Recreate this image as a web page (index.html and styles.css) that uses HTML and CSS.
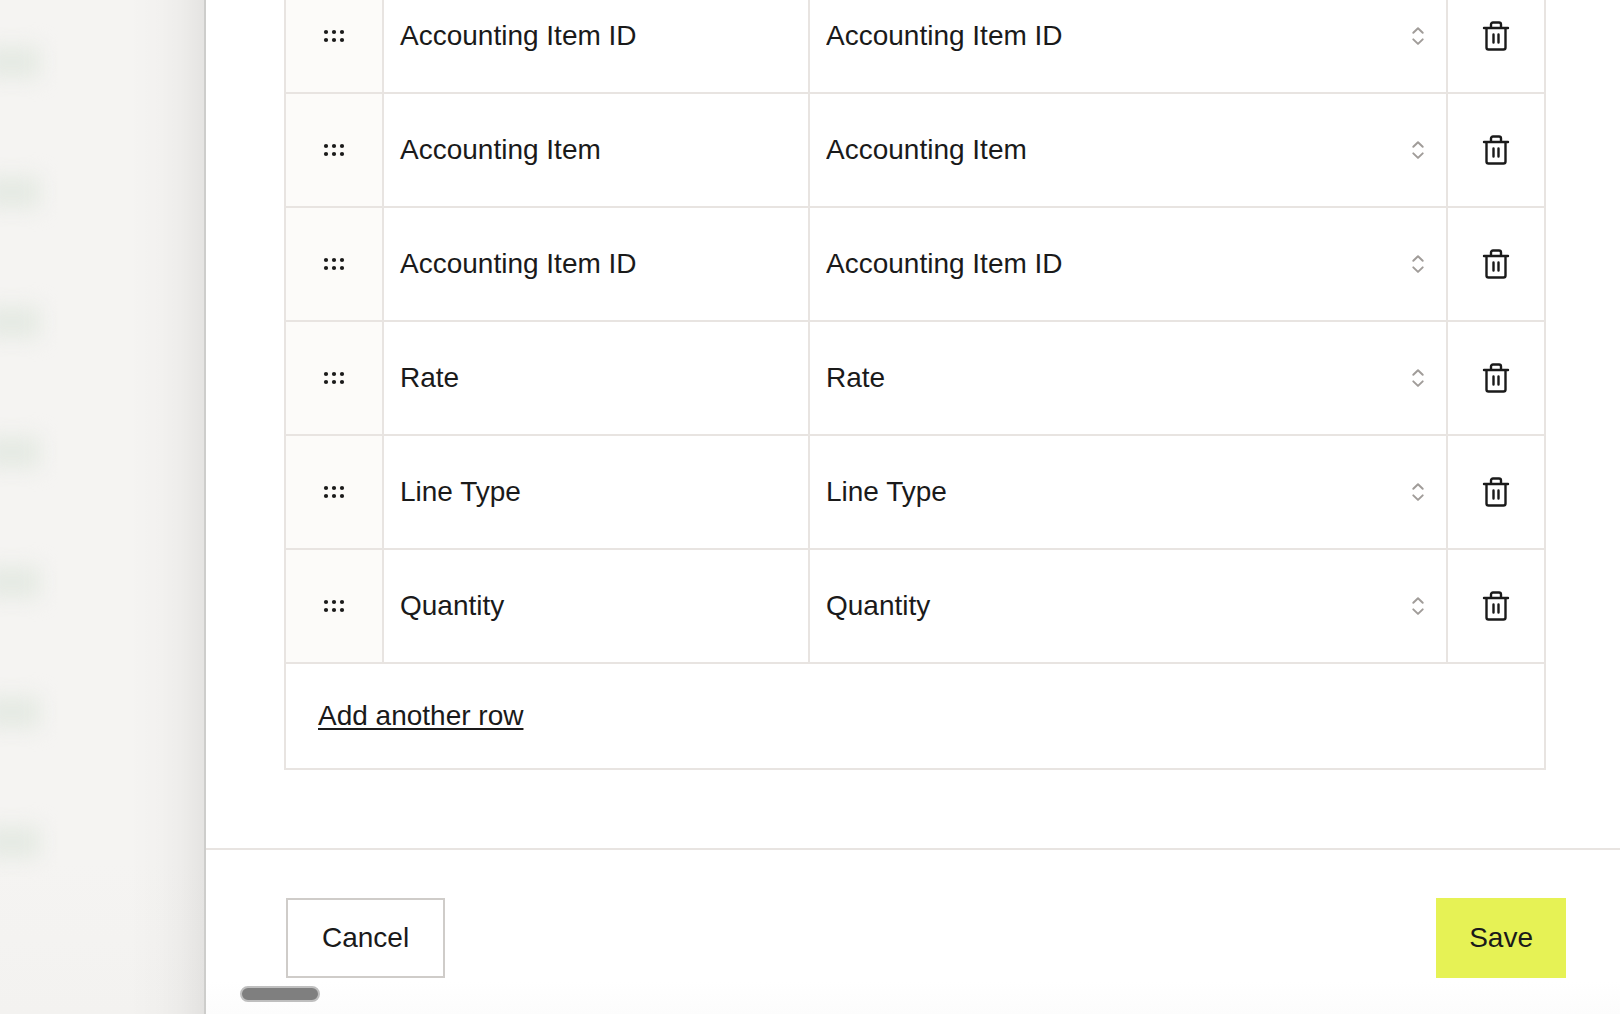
FILE: index.html
```html
<!DOCTYPE html>
<html lang="en">
<head>
<meta charset="utf-8">
<meta name="viewport" content="width=device-width, initial-scale=1">
<title>Edit columns</title>
<link rel="stylesheet" href="styles.css">
</head>
<body>
<svg class="sprite" aria-hidden="true">
  <symbol id="grip" viewBox="0 0 24 16">
    <g fill="currentColor"><circle cx="4" cy="4" r="2.1"/><circle cx="12" cy="4" r="2.1"/><circle cx="20" cy="4" r="2.1"/><circle cx="4" cy="12" r="2.1"/><circle cx="12" cy="12" r="2.1"/><circle cx="20" cy="12" r="2.1"/></g>
  </symbol>
  <symbol id="sort" viewBox="0 0 16 24">
    <path d="M3.3 8.8 8 4.3l4.7 4.5M3.3 15.4 8 19.9l4.7-4.5" fill="none" stroke="currentColor" stroke-width="2" stroke-linecap="round" stroke-linejoin="round"/>
  </symbol>
  <symbol id="trash" viewBox="0 0 32 32">
    <path d="M4 8h24M6.5 8v19.5a2 2 0 0 0 2 2h15a2 2 0 0 0 2-2V8M11 8V4.5a2 2 0 0 1 2-2h6a2 2 0 0 1 2 2V8M13.5 14.5v8M18.5 14.5v8" fill="none" stroke="currentColor" stroke-width="2.4" stroke-linecap="round" stroke-linejoin="round"/>
  </symbol>
</svg>
<div class="app">
  <div class="backdrop" aria-hidden="true">
    <span class="pill"></span><span class="pill"></span><span class="pill"></span><span class="pill"></span><span class="pill"></span><span class="pill"></span><span class="pill"></span>
  </div>
  <main class="drawer">
    <div class="drawer-body">
      <table class="fields">
        <colgroup><col class="col-grip"><col class="col-name"><col><col class="col-delete"></colgroup>
        <tbody>
          <tr>
            <td class="grip-cell"><button class="icon-button" aria-label="Move row"><svg class="grip"><use href="#grip"/></svg></button></td>
            <td class="name-cell">Accounting Item ID</td>
            <td><div class="picker"><select aria-label="Source for Accounting Item ID"><option>Accounting Item ID</option></select><svg class="sort"><use href="#sort"/></svg></div></td>
            <td><button class="icon-button" aria-label="Delete row"><svg class="trash"><use href="#trash"/></svg></button></td>
          </tr>
          <tr>
            <td class="grip-cell"><button class="icon-button" aria-label="Move row"><svg class="grip"><use href="#grip"/></svg></button></td>
            <td class="name-cell">Accounting Item</td>
            <td><div class="picker"><select aria-label="Source for Accounting Item"><option>Accounting Item</option></select><svg class="sort"><use href="#sort"/></svg></div></td>
            <td><button class="icon-button" aria-label="Delete row"><svg class="trash"><use href="#trash"/></svg></button></td>
          </tr>
          <tr>
            <td class="grip-cell"><button class="icon-button" aria-label="Move row"><svg class="grip"><use href="#grip"/></svg></button></td>
            <td class="name-cell">Accounting Item ID</td>
            <td><div class="picker"><select aria-label="Source for Accounting Item ID"><option>Accounting Item ID</option></select><svg class="sort"><use href="#sort"/></svg></div></td>
            <td><button class="icon-button" aria-label="Delete row"><svg class="trash"><use href="#trash"/></svg></button></td>
          </tr>
          <tr>
            <td class="grip-cell"><button class="icon-button" aria-label="Move row"><svg class="grip"><use href="#grip"/></svg></button></td>
            <td class="name-cell">Rate</td>
            <td><div class="picker"><select aria-label="Source for Rate"><option>Rate</option></select><svg class="sort"><use href="#sort"/></svg></div></td>
            <td><button class="icon-button" aria-label="Delete row"><svg class="trash"><use href="#trash"/></svg></button></td>
          </tr>
          <tr>
            <td class="grip-cell"><button class="icon-button" aria-label="Move row"><svg class="grip"><use href="#grip"/></svg></button></td>
            <td class="name-cell">Line Type</td>
            <td><div class="picker"><select aria-label="Source for Line Type"><option>Line Type</option></select><svg class="sort"><use href="#sort"/></svg></div></td>
            <td><button class="icon-button" aria-label="Delete row"><svg class="trash"><use href="#trash"/></svg></button></td>
          </tr>
          <tr>
            <td class="grip-cell"><button class="icon-button" aria-label="Move row"><svg class="grip"><use href="#grip"/></svg></button></td>
            <td class="name-cell">Quantity</td>
            <td><div class="picker"><select aria-label="Source for Quantity"><option>Quantity</option></select><svg class="sort"><use href="#sort"/></svg></div></td>
            <td><button class="icon-button" aria-label="Delete row"><svg class="trash"><use href="#trash"/></svg></button></td>
          </tr>
        </tbody>
        <tfoot>
          <tr><td class="add-cell" colspan="4"><button class="add-row">Add another row</button></td></tr>
        </tfoot>
      </table>
    </div>
    <footer class="drawer-footer">
      <button class="button">Cancel</button>
      <button class="button button-primary">Save</button>
    </footer>
    <div class="scroll-thumb"></div>
  </main>
</div>
</body>
</html>
```
FILE: styles.css
```css
* { box-sizing: border-box; }

body {
  margin: 0;
  background: #f5f4f2;
  color: #1a1a1a;
  font: 28px/40px "Liberation Sans", Arial, sans-serif;
}

button, select {
  margin: 0;
  padding: 0;
  border: 0;
  border-radius: 0;
  background: none;
  color: inherit;
  font: inherit;
  cursor: pointer;
}

svg { display: block; }

.sprite { position: absolute; width: 0; height: 0; }

.app {
  display: grid;
  grid-template-columns: 204px minmax(0, 1fr);
  height: 100vh;
  overflow: hidden;
}

/* The first layer is the shade that the drawer casts on the page. */
.backdrop {
  display: flex;
  flex-direction: column;
  gap: 98px;
  padding-top: 46px;
  background:
    linear-gradient(to left, rgba(0, 0, 0, 0.065), rgba(0, 0, 0, 0.03) 22px, rgba(0, 0, 0, 0.012) 44px, transparent 76px),
    linear-gradient(#f5f4f2 85%, #f3f2f0);
}

.pill {
  flex: none;
  width: 56px;
  height: 32px;
  margin-left: -16px;
  background: #e5eae3;
  filter: blur(10px);
}

.drawer {
  position: relative;
  display: flex;
  flex-direction: column;
  min-height: 0;
  border-left: 2px solid #cdcdcb;
  background: #fff;
}

/* The list is scrolled to its end, so rows run off the top edge. */
.drawer-body {
  display: flex;
  flex: 1;
  flex-direction: column;
  justify-content: flex-end;
  min-height: 0;
  padding: 0 74px 78px 78px;
  overflow: hidden;
}

.fields {
  width: 100%;
  table-layout: fixed;
  border-collapse: separate;
  border-spacing: 0;
  border-right: 2px solid #e8e4e1;
}

.col-grip { width: 98px; }
.col-name { width: 426px; }
.col-delete { width: 98px; }

.fields td {
  height: 114px;
  padding: 0;
  border-left: 2px solid #e8e4e1;
  border-bottom: 2px solid #e8e4e1;
}

.fields .grip-cell { background: #fcfbf9; }
.fields .name-cell { padding: 0 16px; }
.fields .add-cell { height: 106px; padding: 0 32px; }

.icon-button {
  display: grid;
  place-items: center;
  width: 100%;
  height: 112px;
}

.grip { width: 24px; height: 16px; }
.trash { width: 32px; height: 32px; }

.picker { display: grid; align-items: center; }

.picker select {
  grid-area: 1 / 1;
  width: 100%;
  height: 112px;
  padding: 0 48px 0 16px;
  appearance: none;
}

.sort {
  grid-area: 1 / 1;
  justify-self: end;
  width: 16px;
  height: 24px;
  margin-right: 20px;
  color: #a09c99;
  pointer-events: none;
}

.add-row {
  display: block;
  text-decoration: underline;
  text-decoration-thickness: 2px;
  text-decoration-skip-ink: none;
  text-underline-offset: 3px;
}

.drawer-footer {
  display: flex;
  justify-content: space-between;
  padding: 48px 54px 36px 80px;
  border-top: 2px solid #e8e4e1;
  background: linear-gradient(#fff 80%, #fcfcfc);
}

.button {
  height: 80px;
  padding: 0 34px;
  border: 2px solid #cfccc9;
  background: #fff;
}

.button-primary {
  padding: 0 31px;
  border-color: #e6f255;
  background: #e6f255;
}

.scroll-thumb {
  position: absolute;
  bottom: 12px;
  left: 34px;
  width: 80px;
  height: 16px;
  border: 2px solid #bfbfbf;
  border-radius: 8px;
  background: #7f7f7f;
}
```
